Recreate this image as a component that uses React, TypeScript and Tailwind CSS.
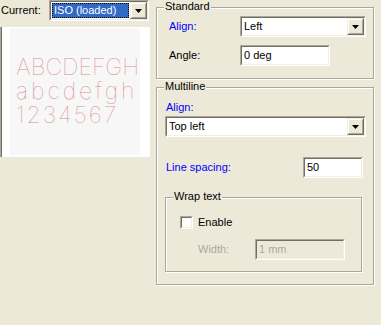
import type { ReactNode } from 'react';
import clsx from 'clsx';

function Sunken({ className, inner, children }: { className?: string; inner?: string; children?: ReactNode }) {
  return (
    <div className={clsx('border border-t-[#aca899] border-l-[#aca899] border-b-white border-r-white', className)}>
      <div className={clsx('h-full flex items-center border border-t-[#716f64] border-l-[#716f64] border-b-[#f1efe2] border-r-[#f1efe2]', inner ?? 'bg-white')}>
        {children}
      </div>
    </div>
  );
}

function DropButton() {
  return (
    <div className="h-full w-[17px] shrink-0 border border-t-[#f1efe2] border-l-[#f1efe2] border-b-[#716f64] border-r-[#716f64]">
      <div className="h-full flex items-center justify-center bg-[#ece9d8] border border-t-white border-l-white border-b-[#aca899] border-r-[#aca899]">
        <svg width="7" height="4" viewBox="0 0 7 4" className="mt-[1px]">
          <polygon points="0,0 7,0 3.5,4" fill="#000" />
        </svg>
      </div>
    </div>
  );
}

function Combo({ value, className }: { value: string; className?: string }) {
  return (
    <Sunken className={clsx('h-[21px]', className)}>
      <span className="flex-1 pl-[2px] text-black">{value}</span>
      <DropButton />
    </Sunken>
  );
}

function TextBox({ value, className, disabled }: { value: string; className?: string; disabled?: boolean }) {
  return (
    <Sunken className={clsx('h-[21px]', className)} inner={disabled ? 'bg-[#ece9d8]' : 'bg-white'}>
      <span className={clsx('pl-[2px]', disabled ? 'text-[#aca899]' : 'text-black')}>{value}</span>
    </Sunken>
  );
}

function Group({ label, className, children }: { label: string; className?: string; children?: ReactNode }) {
  return (
    <div className={clsx('relative border border-[#aca899] shadow-[inset_1px_1px_0_#fff,1px_1px_0_#fff]', className)}>
      <span className="absolute -top-[8px] left-[7px] px-[1px] bg-[#ece9d8] leading-[13px] text-black">{label}</span>
      {children}
    </div>
  );
}

export default function App() {
  return (
    <div className="w-[381px] h-[325px] bg-[#ece9d8] flex font-['Liberation_Sans',Arial,sans-serif] text-[11px] leading-[13px] text-black">
      {/* Left: current font + preview */}
      <div className="w-[150px] flex flex-col">
        <div className="flex items-center h-[21px]">
          <span className="w-[49px] pl-[1px]">Current:</span>
          <Sunken className="w-[100px] h-[21px]">
            <div className="flex-1 h-[15px] mx-[1px] flex items-center bg-[#316ac5] border border-dotted border-black">
              <span className="pl-[1px] text-white">ISO (loaded)</span>
            </div>
            <DropButton />
          </Sunken>
        </div>
        <div className="mt-[6px] h-[130px] border-l border-l-[#aca899]">
          <div className="h-full border-l border-l-[#716f64] bg-white pl-[8px] pr-[10px] pt-[1px] pb-[2px]">
            <div className="h-full bg-[#f7f7f7] pt-[27px] pl-[6px] font-['Inter',sans-serif] font-thin text-[23px] leading-[24px] text-[#d48c8c] whitespace-nowrap">
              <div>ABCDEFGH</div>
              <div className="tracking-[3px]">abcdefgh</div>
              <div className="tracking-[2px]">1234567</div>
            </div>
          </div>
        </div>
      </div>

      {/* Right: settings */}
      <div className="ml-[6px] w-[219px] flex flex-col">
        <Group label="Standard" className="mt-[7px] w-[218px] h-[72px]">
          <div className="pt-[8px] pl-[12px] flex flex-col gap-[8px]">
            <div className="flex items-center h-[21px]">
              <span className="w-[71px] text-[#0000ff]">Align:</span>
              <Combo value="Left" className="w-[126px]" />
            </div>
            <div className="flex items-center h-[21px]">
              <span className="w-[71px]">Angle:</span>
              <TextBox value="0 deg" className="w-[90px]" />
            </div>
          </div>
        </Group>

        <Group label="Multiline" className="mt-[8px] w-[218px] h-[198px]">
          <div className="pt-[13px] pl-[8px] flex flex-col">
            <span className="pl-[1px] text-[#0000ff]">Align:</span>
            <Combo value="Top left" className="mt-[2px] w-[201px]" />
            <div className="mt-[20px] flex items-center h-[21px]">
              <span className="w-[138px] pl-[1px] text-[#0000ff]">Line spacing:</span>
              <TextBox value="50" className="w-[60px]" />
            </div>
            <Group label="Wrap text" className="mt-[19px] w-[197px] h-[75px]">
              <div className="pt-[18px] pl-[14px] flex flex-col">
                <div className="flex items-center h-[13px]">
                  <Sunken className="w-[13px] h-[13px]" />
                  <span className="ml-[5px]">Enable</span>
                </div>
                <div className="mt-[10px] flex items-center h-[21px]">
                  <span className="ml-[18px] w-[57px] text-[#aca899]">Width:</span>
                  <TextBox value="1 mm" className="w-[90px]" disabled />
                </div>
              </div>
            </Group>
          </div>
        </Group>
      </div>
    </div>
  );
}
